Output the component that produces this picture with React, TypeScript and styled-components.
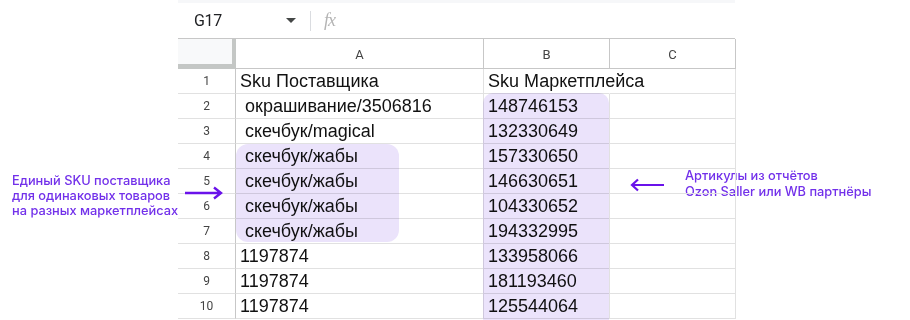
import styled, { createGlobalStyle } from "styled-components";

const GlobalStyle = createGlobalStyle`
  html, body {
    margin: 0;
    padding: 0;
    background: #ffffff;
  }
  body {
    width: 910px;
    height: 320px;
    overflow: hidden;
  }
`;

const Page = styled.div`
  position: relative;
  display: flex;
  width: 910px;
  height: 320px;
  overflow: hidden;
`;

const LeftNote = styled.aside`
  width: 178px;
  flex-shrink: 0;
  box-sizing: border-box;
  padding: 173px 0 0 12px;
`;

const NoteText = styled.p`
  margin: 0;
  font-family: Inter, "Noto Sans", sans-serif;
  font-size: 12.8px;
  font-weight: 500;
  line-height: 15px;
  color: #7230ea;
  white-space: nowrap;
`;

const RightNote = styled.div`
  position: absolute;
  left: 685px;
  top: 168px;
  p {
    line-height: 16px;
  }
`;

const Arrow = styled.svg<{ $left: number; $top: number }>`
  position: absolute;
  left: ${(p) => p.$left}px;
  top: ${(p) => p.$top}px;
  overflow: visible;
`;

const Sheet = styled.section`
  width: 557px;
  flex-shrink: 0;
  display: flex;
  flex-direction: column;
`;

const TopStrip = styled.div`
  height: 3px;
  background: #f6f7f9;
`;

const Toolbar = styled.div`
  height: 35px;
  border-bottom: 1px solid #c7c7c7;
  display: flex;
  align-items: center;
  font-family: Roboto, "Liberation Sans", sans-serif;
`;

const NameBox = styled.div`
  width: 92px;
  padding-left: 16px;
  font-size: 16px;
  color: #202124;
  letter-spacing: -0.3px;
`;

const Caret = styled.span`
  width: 0;
  height: 0;
  border-left: 5px solid transparent;
  border-right: 5px solid transparent;
  border-top: 5px solid #444746;
  margin-right: 14px;
`;

const Divider = styled.span`
  width: 1px;
  height: 20px;
  background: #dadce0;
  margin-right: 13px;
`;

const Fx = styled.span`
  font-family: "Liberation Serif", serif;
  font-style: italic;
  font-size: 18px;
  color: #b4b4b4;
  letter-spacing: -1px;
`;

const Grid = styled.div`
  position: relative;
  display: grid;
  grid-template-columns: 58px 248px 126px 126px;
  grid-auto-rows: 25px;
  grid-template-rows: 30px;
`;

const Corner = styled.div`
  box-sizing: border-box;
  background: #f8f9fa;
  border-right: 4px solid #c4c7c5;
  border-bottom: 5px solid #c4c7c5;
`;

const ColHead = styled.div`
  box-sizing: border-box;
  border-right: 1px solid #c7c7c7;
  border-bottom: 1px solid #c7c7c7;
  display: flex;
  align-items: center;
  justify-content: center;
  font-family: Roboto, "Liberation Sans", sans-serif;
  font-size: 13px;
  color: #444;
  padding-top: 1px;
`;

const RowHead = styled.div`
  box-sizing: border-box;
  border-right: 1px solid #c7c7c7;
  border-bottom: 1px solid #e1e1e1;
  display: flex;
  align-items: center;
  justify-content: center;
  font-family: Roboto, "Liberation Sans", sans-serif;
  font-size: 12px;
  color: #444;
`;

const Cell = styled.div<{ $spill?: boolean }>`
  box-sizing: border-box;
  border-right: 1px solid ${(p) => (p.$spill ? "transparent" : "#e1e1e1")};
  border-bottom: 1px solid #e1e1e1;
  display: flex;
  align-items: center;
  padding-left: 4px;
  font-family: "Liberation Sans", Arial, sans-serif;
  font-size: 18px;
  color: #111;
  white-space: pre;
  min-width: 0;
  position: relative;
  z-index: 1;
`;

const Highlight = styled.div<{
  $left: number;
  $top: number;
  $width: number;
  $height: number;
  $radius: string;
}>`
  position: absolute;
  left: ${(p) => p.$left}px;
  top: ${(p) => p.$top}px;
  width: ${(p) => p.$width}px;
  height: ${(p) => p.$height}px;
  border-radius: ${(p) => p.$radius};
  background: #ebe3fb;
  mix-blend-mode: multiply;
  pointer-events: none;
  z-index: 2;
`;

const rows: [string, string][] = [
  ["Sku Поставщика", "Sku Маркетплейса"],
  [" окрашивание/3506816", "148746153"],
  [" скечбук/magical", "132330649"],
  [" скечбук/жабы", "157330650"],
  [" скечбук/жабы", "146630651"],
  [" скечбук/жабы", "104330652"],
  [" скечбук/жабы", "194332995"],
  ["1197874", "133958066"],
  ["1197874", "181193460"],
  ["1197874", "125544064"],
];

const App = () => {
  return (
    <>
      <GlobalStyle />
      <Page>
        <LeftNote>
          <NoteText>Единый SKU поставщика</NoteText>
          <NoteText>для одинаковых товаров</NoteText>
          <NoteText>на разных маркетплейсах</NoteText>
        </LeftNote>

        <Sheet>
          <TopStrip />
          <Toolbar>
            <NameBox>G17</NameBox>
            <Caret />
            <Divider />
            <Fx>fx</Fx>
          </Toolbar>
          <Grid>
            <Corner />
            <ColHead>A</ColHead>
            <ColHead>B</ColHead>
            <ColHead>C</ColHead>
            {rows.map(([a, b], i) => [
              <RowHead key={`n${i}`}>{i + 1}</RowHead>,
              <Cell key={`a${i}`}>{a}</Cell>,
              <Cell key={`b${i}`} $spill={i === 0}>
                {b}
              </Cell>,
              <Cell key={`c${i}`} />,
            ])}
            <Highlight $left={305} $top={54} $width={126} $height={240} $radius="10px 10px 0 0" />
            <Highlight $left={58} $top={105} $width={163} $height={98} $radius="12px" />
          </Grid>
        </Sheet>

        <RightNote>
          <NoteText>Артикулы из отчётов</NoteText>
          <NoteText>Ozon Saller или WB партнёры</NoteText>
        </RightNote>

        <Arrow $left={185} $top={186} width="38" height="14" viewBox="0 0 38 14">
          <path d="M0 7 H36 M29 1.5 L36 7 L29 12.5" fill="none" stroke="#6a12ea" strokeWidth="2.4" />
        </Arrow>
        <Arrow $left={630} $top={178} width="34" height="14" viewBox="0 0 34 14">
          <path d="M34 7 H2 M8 1.5 L2 7 L8 12.5" fill="none" stroke="#6a12ea" strokeWidth="2.2" />
        </Arrow>
      </Page>
    </>
  );
};

export default App;
